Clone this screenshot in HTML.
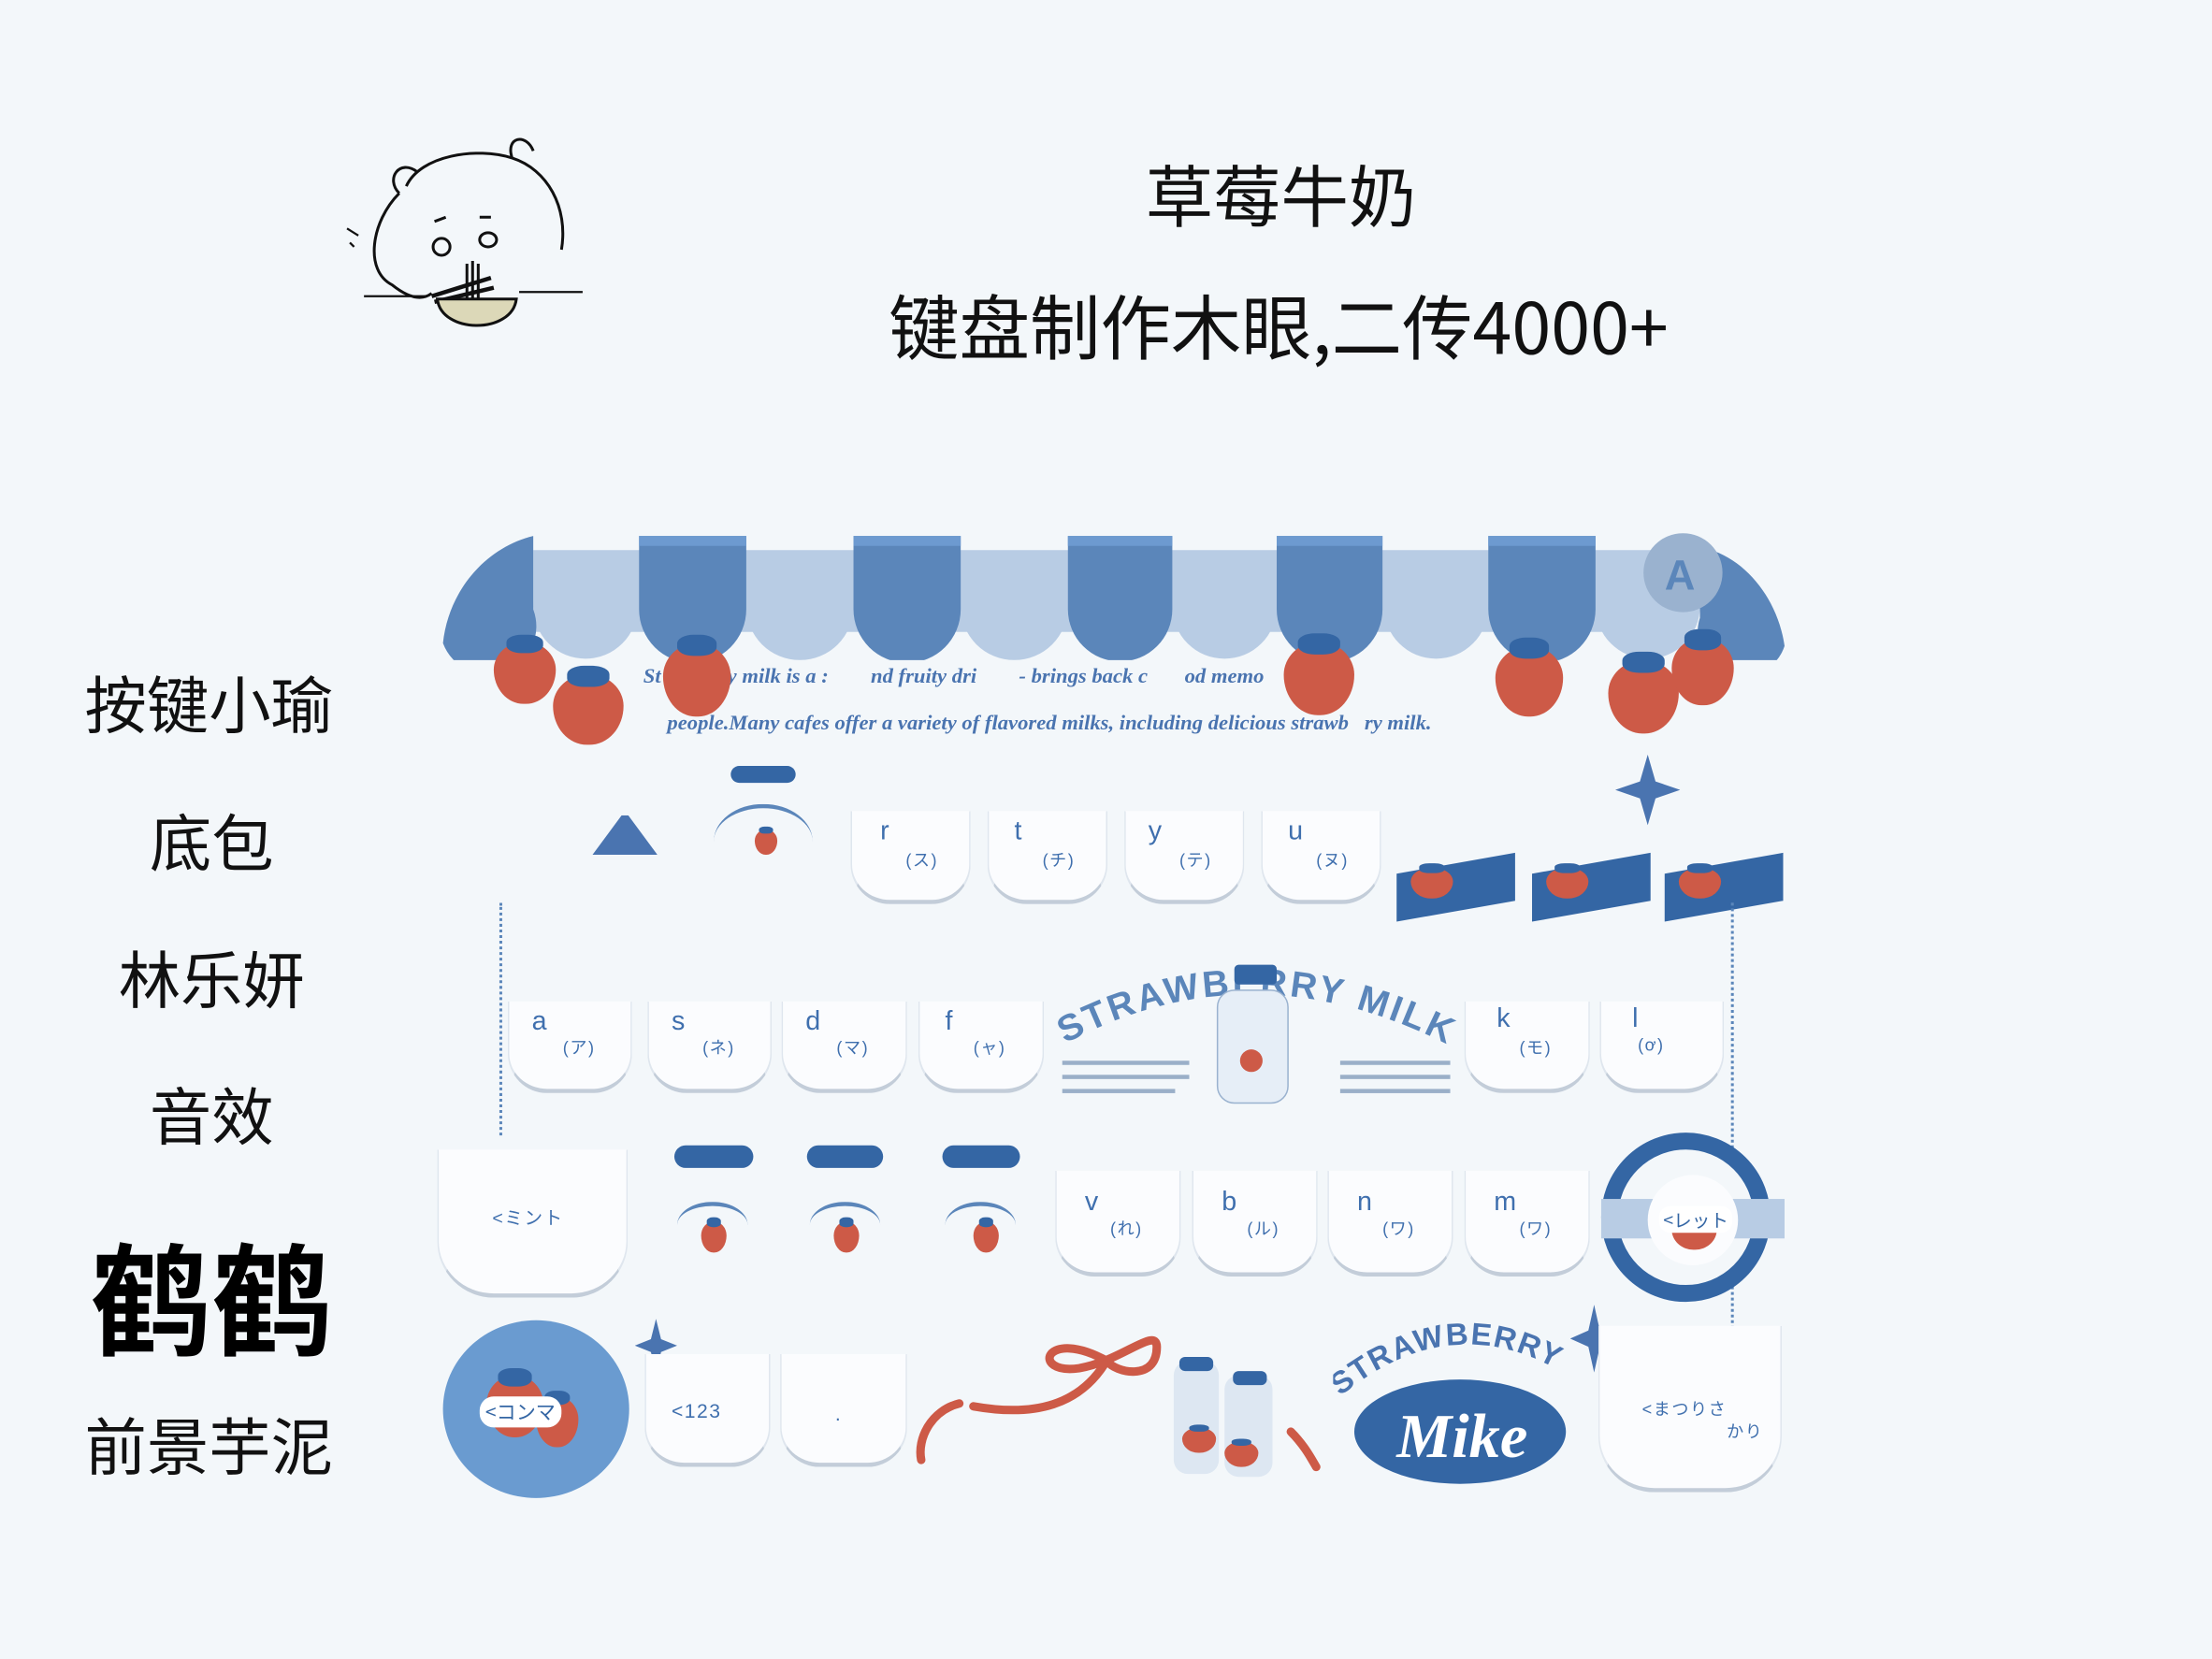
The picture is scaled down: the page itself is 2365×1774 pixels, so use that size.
<!DOCTYPE html>
<html><head><meta charset="utf-8"><style>
html,body{margin:0;padding:0;background:#f3f7fa;width:2365px;height:1774px;overflow:hidden}
#w{position:absolute;left:0;top:0;width:1568px;height:1176px;transform:scale(1.5083);transform-origin:0 0;font-family:"Liberation Sans","Noto Sans CJK SC",sans-serif}
.a{position:absolute}
.t{position:absolute;color:#111;white-space:nowrap;font-family:"WenQuanYi Zen Hei","Noto Sans CJK SC",sans-serif}
.k{position:absolute;background:#fbfcfe;border:1px solid #dfe6ee;border-top:none;border-bottom:3px solid #c3cdd9;border-radius:0 0 28px 28px;box-sizing:border-box;color:#3f6fae}
.k b{position:absolute;font-weight:normal;font-size:19px}
.k i{position:absolute;font-style:normal;font-size:12px;letter-spacing:1px;font-family:"Liberation Sans","Noto Sans CJK JP",sans-serif}
.sb{position:absolute;background:#cd5a47;border-radius:50% 50% 48% 48%/45% 45% 55% 55%}
.sb:before{content:"";position:absolute;left:20%;top:-12%;width:60%;height:30%;background:#3466a4;border-radius:40%}
.dot{position:absolute;border-left:2px dotted #5b86ba}
.it{position:absolute;color:#4a74b0;font-style:italic;font-weight:bold;font-size:15px;font-family:"Liberation Serif",serif;white-space:nowrap}
</style></head><body><div id="w">

<svg class="a" style="left:238px;top:92px" width="180" height="160" viewBox="0 0 180 160" fill="none" stroke="#111" stroke-width="2">
<path d="M50 40 C60 18 100 12 125 20 C150 28 165 55 160 85 M58 30 C45 20 35 35 45 45 M125 20 C120 5 135 2 140 15"/>
<path d="M45 45 C25 65 20 100 40 110 C50 118 60 122 68 116"/>
<ellipse cx="75" cy="83" rx="6" ry="6"/><ellipse cx="108" cy="78" rx="6" ry="5"/>
<path d="M70 65 l8 -3 M102 62 l8 0"/>
<path d="M68 118 L110 105 M70 122 L112 112" stroke-width="3"/>
<path d="M93 95 v25 M97 93 v27 M101 95 v25"/>
<path d="M72 120 C75 145 125 145 128 120 Z" fill="#dcd8b8"/>
<path d="M20 118 h45 M130 115 h45" stroke-width="1.5"/>
<path d="M8 70 l8 5 M10 80 l3 3" stroke-width="1.5"/>
</svg>

<div class="t" style="left:812px;top:101px;font-size:48px">草莓牛奶</div>
<div class="t" style="left:630px;top:194px;font-size:50px">键盘制作木眼,二传4000+</div>

<div class="t" style="left:60px;top:465px;font-size:44px">按键小瑜</div>
<div class="t" style="left:106px;top:563px;font-size:44px">底包</div>
<div class="t" style="left:84px;top:660px;font-size:44px">林乐妍</div>
<div class="t" style="left:106px;top:757px;font-size:44px">音效</div>
<div class="t" style="left:64px;top:854px;font-size:86px;font-weight:bold;color:#000">鹤鹤</div>
<div class="t" style="left:60px;top:991px;font-size:44px">前景芋泥</div>

<svg class="a" style="left:310px;top:378px" width="960" height="90" viewBox="0 0 960 90">
<rect x="68" y="12" width="822" height="58" fill="#b8cce4"/>
<g fill="#b8cce4">
<circle cx="105" cy="52" r="37"/><circle cx="257" cy="52" r="38"/><circle cx="409" cy="52" r="38"/><circle cx="558" cy="52" r="37"/><circle cx="708" cy="52" r="37"/><circle cx="858" cy="52" r="37"/>
</g>
<g fill="#5b86ba">
<path d="M143 2 h76 v52 a38 38 0 0 1 -76 0z"/><path d="M295 2 h76 v52 a38 38 0 0 1 -76 0z"/><path d="M447 2 h74 v52 a37 37 0 0 1 -74 0z"/><path d="M595 2 h75 v52 a37 37 0 0 1 -75 0z"/><path d="M745 2 h76 v52 a38 38 0 0 1 -76 0z"/>
<path d="M68 2 v52 a30 30 0 0 1 -64 24 C8 40 35 10 68 2z"/>
<path d="M895 10 C925 15 950 45 955 80 a30 30 0 0 1 -60 -20z"/>
</g>
<g fill="#6d9ad0"><rect x="143" y="2" width="76" height="7"/><rect x="295" y="2" width="76" height="7"/><rect x="447" y="2" width="74" height="7"/><rect x="595" y="2" width="75" height="7"/><rect x="745" y="2" width="76" height="7"/></g>
<circle cx="883" cy="28" r="28" fill="#9ab2cf"/><text x="870" y="40" font-size="30" font-family="Liberation Sans" fill="#5b86ba" font-weight="bold">A</text>
</svg>

<div class="it" style="left:456px;top:472px">St&nbsp;&nbsp;&nbsp;&nbsp;&nbsp;&nbsp;&nbsp;&nbsp;&nbsp;&nbsp;&nbsp;ry milk is a :&nbsp;&nbsp;&nbsp;&nbsp;&nbsp;&nbsp;&nbsp;&nbsp;nd fruity dri&nbsp;&nbsp;&nbsp;&nbsp;&nbsp;&nbsp;&nbsp;&nbsp;- brings back c&nbsp;&nbsp;&nbsp;&nbsp;&nbsp;&nbsp;&nbsp;od memo&nbsp;&nbsp;&nbsp;&nbsp;&nbsp;&nbsp;&nbsp;&nbsp;&nbsp;&nbsp;&nbsp;&nbsp;&nbsp;ny</div>
<div class="it" style="left:473px;top:505px">people.Many cafes offer a variety of flavored milks, including delicious strawb&nbsp;&nbsp;&nbsp;ry milk.</div>

<div class="sb" style="left:350px;top:455px;width:44px;height:44px"></div>
<div class="sb" style="left:392px;top:478px;width:50px;height:50px"></div>
<div class="sb" style="left:470px;top:456px;width:48px;height:52px"></div>
<div class="sb" style="left:910px;top:455px;width:50px;height:52px"></div>
<div class="sb" style="left:1060px;top:458px;width:48px;height:50px"></div>
<div class="sb" style="left:1140px;top:468px;width:50px;height:52px"></div>
<div class="sb" style="left:1185px;top:452px;width:44px;height:48px"></div>

<div class="a" style="left:518px;top:543px;width:46px;height:12px;background:#3466a4;border-radius:8px"></div>
<div class="a" style="left:420px;top:578px;width:46px;height:28px;background:#4a74b0;clip-path:polygon(45% 0,55% 0,100% 100%,0 100%)"></div>
<div class="a" style="left:506px;top:570px;width:70px;height:50px;border-top:3px solid #5b86ba;border-radius:50% 50% 0 0"></div>
<div class="sb" style="left:535px;top:588px;width:16px;height:18px"></div>

<div class="k" style="left:603px;top:575px;width:85px;height:66px"><b style="left:20px;top:4px">r</b><i style="left:38px;top:26px">(ス)</i></div>
<div class="k" style="left:700px;top:575px;width:85px;height:66px"><b style="left:18px;top:4px">t</b><i style="left:38px;top:26px">(チ)</i></div>
<div class="k" style="left:797px;top:575px;width:85px;height:66px"><b style="left:16px;top:4px">y</b><i style="left:38px;top:26px">(テ)</i></div>
<div class="k" style="left:894px;top:575px;width:85px;height:66px"><b style="left:18px;top:4px">u</b><i style="left:38px;top:26px">(ヌ)</i></div>
<div class="a" style="left:990px;top:612px;width:84px;height:34px;background:#3466a4;transform:skewY(-10deg)"></div>
<div class="a" style="left:1086px;top:612px;width:84px;height:34px;background:#3466a4;transform:skewY(-10deg)"></div>
<div class="a" style="left:1180px;top:612px;width:84px;height:34px;background:#3466a4;transform:skewY(-10deg)"></div>
<div class="sb" style="left:1000px;top:615px;width:30px;height:22px"></div>
<div class="sb" style="left:1096px;top:615px;width:30px;height:22px"></div>
<div class="sb" style="left:1190px;top:615px;width:30px;height:22px"></div>
<div class="a" style="left:1145px;top:535px;width:46px;height:50px;background:#4a74b0;clip-path:polygon(50% 0,62% 38%,100% 50%,62% 62%,50% 100%,38% 62%,0 50%,38% 38%)"></div>

<div class="dot" style="left:354px;top:640px;height:165px"></div>
<div class="dot" style="left:1227px;top:640px;height:310px"></div>

<div class="k" style="left:360px;top:710px;width:88px;height:65px"><b style="left:16px;top:4px">a</b><i style="left:38px;top:24px">(ア)</i></div>
<div class="k" style="left:459px;top:710px;width:88px;height:65px"><b style="left:16px;top:4px">s</b><i style="left:38px;top:24px">(ネ)</i></div>
<div class="k" style="left:554px;top:710px;width:89px;height:65px"><b style="left:16px;top:4px">d</b><i style="left:38px;top:24px">(マ)</i></div>
<div class="k" style="left:651px;top:710px;width:89px;height:65px"><b style="left:18px;top:4px">f</b><i style="left:38px;top:24px">(ャ)</i></div>
<div class="k" style="left:1038px;top:710px;width:89px;height:65px"><b style="left:22px;top:2px">k</b><i style="left:38px;top:24px">(モ)</i></div>
<div class="k" style="left:1134px;top:710px;width:88px;height:65px"><b style="left:22px;top:2px">l</b><i style="left:26px;top:24px">(ơ)</i></div>
<svg class="a" style="left:745px;top:680px" width="290" height="110" viewBox="0 0 290 110"><path id="arc" d="M10 60 Q140 -10 280 60" fill="none"/><text font-family="Liberation Sans" font-weight="bold" font-size="26" fill="#5b86ba" letter-spacing="2"><textPath href="#arc">STRAWBERRY MILK</textPath></text>
<rect x="130" y="4" width="30" height="14" rx="3" fill="#3466a4"/><rect x="118" y="22" width="50" height="80" rx="12" fill="#e6eef7" stroke="#9ab2cf"/><circle cx="142" cy="72" r="8" fill="#cd5a47"/>
<g fill="#9aafc8"><rect x="8" y="72" width="90" height="3"/><rect x="8" y="82" width="90" height="3"/><rect x="8" y="92" width="80" height="3"/><rect x="205" y="72" width="78" height="3"/><rect x="205" y="82" width="78" height="3"/><rect x="205" y="92" width="78" height="3"/></g></svg>

<div class="k" style="left:310px;top:815px;width:135px;height:105px;border-radius:0 0 40px 40px"><i style="left:38px;top:38px;font-size:13px">&lt;ミント</i></div>
<div class="a" style="left:478px;top:812px;width:56px;height:16px;background:#3466a4;border-radius:9px"></div>
<div class="a" style="left:572px;top:812px;width:54px;height:16px;background:#3466a4;border-radius:9px"></div>
<div class="a" style="left:668px;top:812px;width:55px;height:16px;background:#3466a4;border-radius:9px"></div>
<div class="a" style="left:480px;top:852px;width:50px;height:30px;border-top:3px solid #5b86ba;border-radius:50% 50% 0 0"></div>
<div class="a" style="left:574px;top:852px;width:50px;height:30px;border-top:3px solid #5b86ba;border-radius:50% 50% 0 0"></div>
<div class="a" style="left:670px;top:852px;width:50px;height:30px;border-top:3px solid #5b86ba;border-radius:50% 50% 0 0"></div>
<div class="sb" style="left:497px;top:866px;width:18px;height:22px"></div>
<div class="sb" style="left:591px;top:866px;width:18px;height:22px"></div>
<div class="sb" style="left:690px;top:866px;width:18px;height:22px"></div>
<div class="k" style="left:748px;top:830px;width:89px;height:75px"><b style="left:20px;top:12px">v</b><i style="left:38px;top:32px">(れ)</i></div>
<div class="k" style="left:845px;top:830px;width:89px;height:75px"><b style="left:20px;top:12px">b</b><i style="left:38px;top:32px">(ル)</i></div>
<div class="k" style="left:941px;top:830px;width:89px;height:75px"><b style="left:20px;top:12px">n</b><i style="left:38px;top:32px">(ワ)</i></div>
<div class="k" style="left:1038px;top:830px;width:89px;height:75px"><b style="left:20px;top:12px">m</b><i style="left:38px;top:32px">(ワ)</i></div>
<div class="a" style="left:1135px;top:803px;width:120px;height:120px;border-radius:50%;border:12px solid #3466a4;box-sizing:border-box;background:#f3f7fa"></div>
<div class="a" style="left:1135px;top:850px;width:130px;height:28px;background:#b8cce4"></div>
<div class="a" style="left:1168px;top:833px;width:64px;height:64px;border-radius:50%;background:#fbfcfe"></div>
<div class="sb" style="left:1185px;top:860px;width:32px;height:26px"></div>
<div class="a" style="left:1176px;top:855px;font-size:13px;color:#3466a4;background:#fff;border-radius:8px;padding:0 3px;font-family:'Noto Sans CJK JP',sans-serif">&lt;レット</div>

<div class="a" style="left:314px;top:936px;width:132px;height:126px;border-radius:50%;background:#6a9bd0"></div>
<div class="sb" style="left:345px;top:975px;width:40px;height:44px"></div>
<div class="sb" style="left:380px;top:990px;width:30px;height:36px"></div>
<div class="a" style="left:340px;top:990px;font-size:14px;color:#3466a4;background:#fff;border-radius:10px;padding:1px 4px;font-family:'Noto Sans CJK JP',sans-serif">&lt;コンマ</div>
<div class="a" style="left:450px;top:935px;width:30px;height:38px;background:#4a74b0;clip-path:polygon(50% 0,62% 38%,100% 50%,62% 62%,50% 100%,38% 62%,0 50%,38% 38%)"></div>
<div class="k" style="left:457px;top:960px;width:89px;height:80px"><i style="left:18px;top:32px;font-size:14px">&lt;123</i></div>
<div class="k" style="left:553px;top:960px;width:90px;height:80px"><i style="left:38px;top:34px;font-size:14px">.</i></div>
<svg class="a" style="left:645px;top:935px" width="300" height="120" viewBox="0 0 300 120" fill="none" stroke="#cd5a47" stroke-width="6" stroke-linecap="round">
<path d="M140 30 C95 5 85 40 120 35 C150 30 175 5 175 20 C175 45 145 38 140 30"/><path d="M138 32 C120 60 90 70 45 62"/><path d="M35 60 C15 65 5 85 8 100"/><path d="M270 80 C280 90 285 100 288 105"/>
</svg>
<div class="a" style="left:832px;top:965px;width:32px;height:80px;background:#dde7f2;border-radius:10px"></div>
<div class="a" style="left:868px;top:975px;width:34px;height:72px;background:#dde7f2;border-radius:10px"></div>
<div class="a" style="left:836px;top:962px;width:24px;height:10px;background:#3466a4;border-radius:4px"></div>
<div class="a" style="left:874px;top:972px;width:24px;height:10px;background:#3466a4;border-radius:4px"></div>
<div class="sb" style="left:838px;top:1012px;width:24px;height:18px"></div><div class="sb" style="left:868px;top:1022px;width:24px;height:18px"></div>
<div class="a" style="left:1113px;top:925px;width:34px;height:48px;background:#4a74b0;clip-path:polygon(50% 0,62% 38%,100% 50%,62% 62%,50% 100%,38% 62%,0 50%,38% 38%)"></div>
<svg class="a" style="left:945px;top:935px" width="185" height="120" viewBox="0 0 185 120"><path id="arc2" d="M5 55 Q90 -15 178 48" fill="none"/><text font-family="Liberation Sans" font-weight="bold" font-size="22" fill="#4a74b0" letter-spacing="1"><textPath href="#arc2">STRAWBERRY</textPath></text>
<ellipse cx="90" cy="80" rx="75" ry="37" fill="#3466a4"/><text x="45" y="98" font-family="Liberation Serif" font-style="italic" font-weight="bold" font-size="44" fill="#fff">Mike</text></svg>
<div class="k" style="left:1133px;top:940px;width:130px;height:118px;border-radius:0 0 40px 40px;border-left:1px solid #e2e8ef"><i style="left:30px;top:50px;font-size:12px">&lt;まつりさ</i><i style="left:90px;top:66px;font-size:12px">かり</i></div>

</div></body></html>
